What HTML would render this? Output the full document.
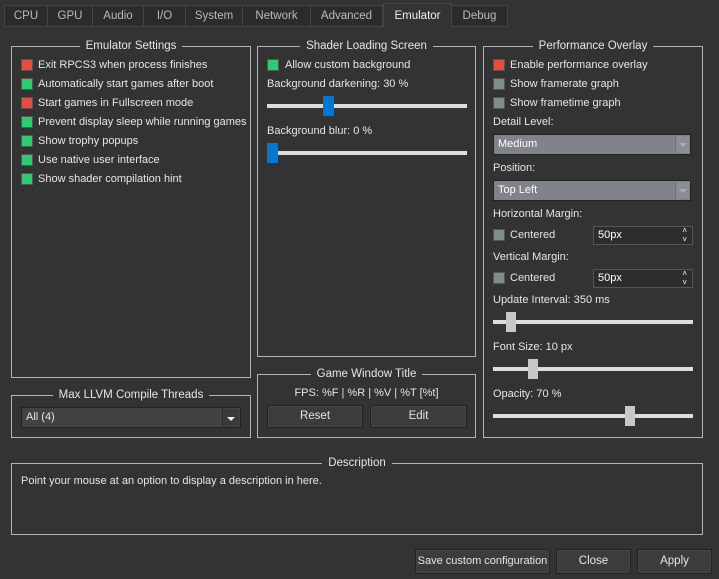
<!DOCTYPE html>
<html><head><style>
*{box-sizing:border-box;margin:0;padding:0}
html,body{width:719px;height:579px;overflow:hidden}
body{background:#333;font-family:"Liberation Sans",sans-serif;font-size:11px;color:#e6e6e6;position:relative}
.a{position:absolute;white-space:nowrap;line-height:14px}
.tab{position:absolute;top:5px;height:22px;border:1px solid #444;background:#2b2b2b;color:#bbb;text-align:center;line-height:20px;font-size:11.5px}
.sel{top:3px;height:24px;background:#333;border-color:#444;border-bottom:none;color:#eee;line-height:24px}
.g{position:absolute;border:1px solid #b4b4b4}
.gt{position:absolute;top:-8px;left:0;right:0;text-align:center;line-height:14px;font-size:11.5px}
.gt span{background:#333;padding:0 6px}
.cb{position:absolute;width:12px;height:12px;border:1px solid #555}
.r{background:#e74c3c}.gr{background:#2ecc71}.gy{background:#7f8c8d}
.groove{position:absolute;height:4px;background:#ddd}
.h{position:absolute;width:11px;height:20px}
.btn{position:absolute;background:#3c3c3c;border:1px solid #222;text-align:center;line-height:21px;color:#e6e6e6;box-shadow:inset 0 0 0 1px #444;white-space:nowrap;font-size:11.5px}
.combo{position:absolute;background:#80848a;border:1px solid #222;color:#fff;line-height:17px;padding-left:4px}
.arr{position:absolute;right:1px;top:1px;bottom:1px;width:14px;background:#8a8e94;border-left:1px solid #6e7278}
.spin{position:absolute;border:1px solid #555;background:#2d2d2d;line-height:17px;padding-left:4px;color:#fff}
</style></head><body>
<div class="tab" style="left:4px;width:44px">CPU</div>
<div class="tab" style="left:47px;width:46px">GPU</div>
<div class="tab" style="left:92px;width:52px">Audio</div>
<div class="tab" style="left:143px;width:43px">I/O</div>
<div class="tab" style="left:185px;width:58px">System</div>
<div class="tab" style="left:242px;width:69px">Network</div>
<div class="tab" style="left:310px;width:73px">Advanced</div>
<div class="tab" style="left:451px;width:57px">Debug</div>
<div class="tab sel" style="left:383px;width:69px">Emulator</div>

<div class="g" style="left:11px;top:46px;width:240px;height:332px"><div class="gt"><span>Emulator Settings</span></div></div>
<div class="cb r" style="left:21px;top:59px"></div><div class="a" style="left:38px;top:58px">Exit RPCS3 when process finishes</div>
<div class="cb gr" style="left:21px;top:78px"></div><div class="a" style="left:38px;top:77px">Automatically start games after boot</div>
<div class="cb r" style="left:21px;top:97px"></div><div class="a" style="left:38px;top:96px">Start games in Fullscreen mode</div>
<div class="cb gr" style="left:21px;top:116px"></div><div class="a" style="left:38px;top:115px">Prevent display sleep while running games</div>
<div class="cb gr" style="left:21px;top:135px"></div><div class="a" style="left:38px;top:134px">Show trophy popups</div>
<div class="cb gr" style="left:21px;top:154px"></div><div class="a" style="left:38px;top:153px">Use native user interface</div>
<div class="cb gr" style="left:21px;top:173px"></div><div class="a" style="left:38px;top:172px">Show shader compilation hint</div>

<div class="g" style="left:11px;top:395px;width:240px;height:43px"><div class="gt"><span>Max LLVM Compile Threads</span></div></div>
<div class="combo" style="left:21px;top:407px;width:220px;height:21px;background:#424242;color:#e6e6e6;line-height:19px">All (4)<div class="arr" style="background:#3a3a3a;border-left:1px solid #2a2a2a;width:17px"><svg width="17" height="19"><path d="M4 8h8l-4 4z" fill="#eee"/></svg></div></div>

<div class="g" style="left:257px;top:46px;width:219px;height:311px"><div class="gt"><span>Shader Loading Screen</span></div></div>
<div class="cb gr" style="left:267px;top:59px"></div><div class="a" style="left:285px;top:58px">Allow custom background</div>
<div class="a" style="left:267px;top:77px">Background darkening: 30 %</div>
<div class="groove" style="left:267px;top:104px;width:200px"></div>
<div class="h" style="left:323px;top:96px;background:#0078d7"></div>
<div class="a" style="left:267px;top:124px">Background blur: 0 %</div>
<div class="groove" style="left:267px;top:151px;width:200px"></div>
<div class="h" style="left:267px;top:143px;background:#0078d7"></div>

<div class="g" style="left:257px;top:374px;width:219px;height:64px"><div class="gt"><span>Game Window Title</span></div></div>
<div class="a" style="left:257px;width:219px;text-align:center;top:386px">FPS: %F | %R | %V | %T [%t]</div>
<div class="btn" style="left:267px;top:405px;width:96px;height:23px">Reset</div>
<div class="btn" style="left:370px;top:405px;width:97px;height:23px">Edit</div>

<div class="g" style="left:483px;top:46px;width:220px;height:392px"><div class="gt"><span>Performance Overlay</span></div></div>
<div class="cb r" style="left:493px;top:59px"></div><div class="a" style="left:510px;top:58px">Enable performance overlay</div>
<div class="cb gy" style="left:493px;top:78px"></div><div class="a" style="left:510px;top:77px">Show framerate graph</div>
<div class="cb gy" style="left:493px;top:97px"></div><div class="a" style="left:510px;top:96px">Show frametime graph</div>
<div class="a" style="left:493px;top:115px">Detail Level:</div>
<div class="combo" style="left:493px;top:134px;width:198px;height:21px;line-height:19px">Medium<div class="arr"><svg width="14" height="17"><path d="M3 7h8l-4 4z" fill="#a8acb2"/></svg></div></div>
<div class="a" style="left:493px;top:161px">Position:</div>
<div class="combo" style="left:493px;top:180px;width:198px;height:21px;line-height:19px">Top Left<div class="arr"><svg width="14" height="17"><path d="M3 7h8l-4 4z" fill="#a8acb2"/></svg></div></div>
<div class="a" style="left:493px;top:207px">Horizontal Margin:</div>
<div class="cb gy" style="left:493px;top:229px"></div><div class="a" style="left:510px;top:228px">Centered</div>
<div class="spin" style="left:593px;top:226px;width:100px;height:19px">50px<span style="position:absolute;right:5px;top:-1px;font-size:8px;line-height:9px">˄<br>˅</span></div>
<div class="a" style="left:493px;top:250px">Vertical Margin:</div>
<div class="cb gy" style="left:493px;top:272px"></div><div class="a" style="left:510px;top:271px">Centered</div>
<div class="spin" style="left:593px;top:269px;width:100px;height:19px">50px<span style="position:absolute;right:5px;top:-1px;font-size:8px;line-height:9px">˄<br>˅</span></div>
<div class="a" style="left:493px;top:293px">Update Interval: 350 ms</div>
<div class="groove" style="left:493px;top:320px;width:200px"></div>
<div class="h" style="left:506px;top:312px;background:#c8c8c8;width:10px"></div>
<div class="a" style="left:493px;top:340px">Font Size: 10 px</div>
<div class="groove" style="left:493px;top:367px;width:200px"></div>
<div class="h" style="left:528px;top:359px;background:#c8c8c8;width:10px"></div>
<div class="a" style="left:493px;top:387px">Opacity: 70 %</div>
<div class="groove" style="left:493px;top:414px;width:200px"></div>
<div class="h" style="left:625px;top:406px;background:#c8c8c8;width:10px"></div>

<div class="g" style="left:11px;top:463px;width:692px;height:72px"><div class="gt"><span>Description</span></div></div>
<div class="a" style="left:21px;top:474px">Point your mouse at an option to display a description in here.</div>

<div class="btn" style="left:415px;top:549px;width:135px;height:25px;line-height:23px;font-size:11px">Save custom configuration</div>
<div class="btn" style="left:556px;top:549px;width:75px;height:25px;line-height:23px">Close</div>
<div class="btn" style="left:637px;top:549px;width:75px;height:25px;line-height:23px">Apply</div>
</body></html>
